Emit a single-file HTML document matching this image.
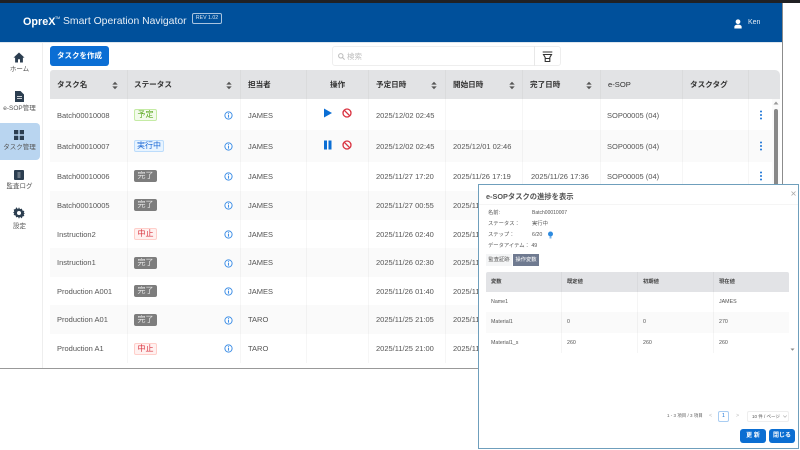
<!DOCTYPE html>
<html lang="ja"><head><meta charset="utf-8"><title>OpreX Smart Operation Navigator</title>
<style>
*{box-sizing:border-box}
html,body{margin:0;padding:0;width:800px;height:450px;overflow:hidden;background:#fff}
body{font-family:"Liberation Sans","Noto Sans CJK JP",sans-serif;font-size:7.5px;color:#555}
#all{position:absolute;left:0;top:0;width:800px;height:450px;overflow:hidden;filter:blur(.3px)}
.a{position:absolute;white-space:nowrap}
#win{position:absolute;left:0;top:0;width:783px;height:369px;background:#fff;border-right:1px solid #8c8c8c;border-bottom:1px solid #999;overflow:hidden}
.nav{position:absolute;left:0;width:39px;text-align:center;font-size:6.5px;color:#555;line-height:9px;white-space:nowrap}
.th{position:absolute;top:70px;height:29px;line-height:29px;font-weight:700;font-size:7.6px;color:#333;white-space:nowrap}
.r{position:absolute;left:50px;width:722px;background:#fff}
.r.z{background:#fafafa}
.r span{position:absolute;white-space:nowrap;top:0}
.c1{left:7px}.c3{left:198px}.c5{left:326px}.c6{left:403px}.c7{left:481px}.c8{left:557px}
.b{height:12px;line-height:10px;border:1px solid;border-radius:2px;text-align:center;font-size:8px;left:84px;width:23px}
.ok{background:#f3fbec;border-color:#c5eba5;color:#5aa81f}
.run{background:#e8f4ff;border-color:#bcdcfb;color:#1766d6;width:30px}
.done{background:#7d7d7d;border-color:#7d7d7d;color:#e4e4e4}
.stop{background:#fff1f0;border-color:#ffcfca;color:#d9333f}
.i{left:174px}
.k{left:709px}
.vl{position:absolute;top:70px;width:1px;height:293px;background:rgba(0,0,0,.035)}
.sort{position:absolute;top:81px}
#modal{position:absolute;left:478px;top:184px;width:321px;height:265px;background:#fff;border:1px solid #6f9fbc;overflow:hidden;font-size:5.3px;color:#555}
#modal .a{line-height:8px}
.mh{position:absolute;top:87px;height:20px;line-height:20px;font-weight:700;color:#444;font-size:5.3px}
.mr{position:absolute;left:7px;width:303px}
.mr span{position:absolute;top:0;white-space:nowrap}
.btn{position:absolute;top:244px;width:26px;height:14px;background:#0b6ed2;color:#fff;border-radius:3px;text-align:center;font-weight:700;font-size:6px;line-height:14px}
</style></head>
<body>
<svg width="0" height="0" style="position:absolute">
<defs>
<symbol id="info" viewBox="0 0 10 10"><circle cx="5" cy="5" r="4" fill="#fff" stroke="#3f8fe6" stroke-width="1.100"/><rect x="4.400" y="4.200" width="1.200" height="3.200" fill="#3f8fe6"/><rect x="4.400" y="2.400" width="1.200" height="1.100" fill="#3f8fe6"/></symbol>
<symbol id="sort" viewBox="0 0 8 10"><path d="M4 .8 7 4H1zM4 9.200 1 6h6z" fill="#555"/></symbol>
<symbol id="keb" viewBox="0 0 4 10"><circle cx="2" cy="1.500" r="1" fill="#1a73d6"/><circle cx="2" cy="5" r="1" fill="#1a73d6"/><circle cx="2" cy="8.500" r="1" fill="#1a73d6"/></symbol>
<symbol id="ban" viewBox="0 0 10 10"><circle cx="5" cy="5" r="4" fill="none" stroke="#d9303e" stroke-width="1.300"/><path d="M2.200 2.200 7.800 7.800" stroke="#d9303e" stroke-width="1.300"/></symbol>
</defs></svg>
<div id="all">
<div id="win">
<div style="position:absolute;left:0;top:0;width:783px;height:42px;background:#00509b"></div>
<div style="position:absolute;left:0;top:42px;width:783px;height:1px;background:#dde6ee"></div>
<div class="a" style="left:23px;top:15px;line-height:14px;font-size:10.8px;font-weight:700;color:#fff">OpreX</div>
<div class="a" style="left:55px;top:16px;font-size:3.500px;line-height:5px;color:#fff">TM</div>
<div class="a" style="left:63px;top:15px;line-height:14px;font-size:10.4px;color:#e6eef6">Smart Operation Navigator</div>
<div class="a" style="left:192px;top:13px;width:30px;height:11px;border:1px solid #a9c4df;border-radius:2px;color:#dbe7f2;font-size:5.200px;line-height:9px;text-align:center">REV 1.02</div>
<svg class="a" style="left:733px;top:19px" width="10" height="10" viewBox="0 0 10 11"><circle cx="5" cy="3" r="2.600" fill="#fff"/><path d="M1 10.500V8.600C1 7 3 6.200 5 6.200s4 .8 4 2.400v1.900z" fill="#fff"/></svg>
<div class="a" style="left:748px;top:18px;line-height:10px;font-size:7px;color:#e4edf5">Ken</div>

<div style="position:absolute;left:42px;top:43px;width:1px;height:325px;background:#eee"></div>
<div style="position:absolute;left:0;top:123px;width:40px;height:37px;background:#b9d5f0;border-radius:0 4px 4px 0"></div>

<div class="nav" style="top:65px">ホーム</div>
<svg class="a" style="left:13px;top:52px" width="12" height="11" viewBox="0 0 12 11"><path d="M6 .5.500 5.600h1.600V10.500h2.900V7.200h2V10.500h2.900V5.600h1.600z" fill="#2c3e50"/></svg>
<div class="nav" style="top:104px">e-SOP管理</div>
<svg class="a" style="left:15px;top:91px" width="9" height="11" viewBox="0 0 9 11"><path d="M0 0h5.500L9 3.500V11H0z" fill="#2c3e50"/><path d="M2 5.500h5M2 7.500h5" stroke="#fff" stroke-width=".7"/></svg>
<div class="nav" style="top:143px">タスク管理</div>
<svg class="a" style="left:14px;top:130px" width="10" height="10" viewBox="0 0 10 10"><path d="M0 0h4.300v4.300H0zM5.700 0H10v4.300H5.700zM0 5.700h4.300V10H0zM5.700 5.700H10V10H5.700z" fill="#2c3e50"/></svg>
<div class="nav" style="top:182px">監査ログ</div>
<svg class="a" style="left:14px;top:170px" width="10" height="10" viewBox="0 0 10 10"><rect width="10" height="10" rx="1" fill="#2c3e50"/><path d="M3.500 3h3M3.500 5h3M3.500 7h3" stroke="#cfd6dc" stroke-width=".8"/></svg>
<div class="nav" style="top:222px">設定</div>
<svg class="a" style="left:13px;top:207px" width="12" height="12" viewBox="0 0 12 12"><path d="M6 .3 7 2.100l1.900-.5.500 1.900 1.900.5-.5 1.900L12 6l-1.200 1.100.5 1.900-1.900.5-.5 1.900L7 9.900 6 11.700 5 9.900l-1.900.5-.5-1.900L.7 8l.5-1.900L0 6l1.200-1.600-.5-1.900 1.900-.5.500-1.900L5 2.100z" fill="#2c3e50"/><circle cx="6" cy="6" r="2" fill="#fff"/></svg>

<div class="a" style="left:50px;top:46px;width:59px;height:20px;background:#0b6ed4;border-radius:3px;color:#fff;font-weight:700;font-size:7.500px;line-height:20px;text-align:center">タスクを作成</div>
<div class="a" style="left:332px;top:46px;width:229px;height:20px;border:1px solid #eee;border-radius:3px"></div>
<div style="position:absolute;left:534px;top:46px;width:1px;height:20px;background:#e8e8e8"></div>
<svg class="a" style="left:338px;top:53px" width="7" height="7" viewBox="0 0 7 7"><circle cx="2.800" cy="2.800" r="2.200" fill="none" stroke="#bbb"/><path d="M4.500 4.500 6.600 6.600" stroke="#bbb"/></svg>
<div class="a" style="left:347px;top:51px;line-height:11px;font-size:7.500px;color:#bdbdbd">検索</div>
<svg class="a" style="left:542px;top:51px" width="11" height="12" viewBox="0 0 11 12"><path d="M.7 1h9.600M1.500 3.500h8L7.800 6.500v4H3.200v-4zM3.200 7.500h4.600" fill="none" stroke="#333" stroke-width="1.100"/></svg>

<div style="position:absolute;left:50px;top:70px;width:730px;height:29px;background:#e2e3e5;border-radius:3px 5px 0 0"></div>
<div class="th" style="left:57px">タスク名</div>
<div class="th" style="left:134px">ステータス</div>
<div class="th" style="left:248px">担当者</div>
<div class="th" style="left:330px">操作</div>
<div class="th" style="left:376px">予定日時</div>
<div class="th" style="left:453px">開始日時</div>
<div class="th" style="left:530px">完了日時</div>
<div class="th" style="left:608px;font-weight:400">e-SOP</div>
<div class="th" style="left:690px">タスクタグ</div>
<svg class="sort" style="left:111px" width="8" height="9"><use href="#sort"/></svg>
<svg class="sort" style="left:225px" width="8" height="9"><use href="#sort"/></svg>
<svg class="sort" style="left:430px" width="8" height="9"><use href="#sort"/></svg>
<svg class="sort" style="left:508px" width="8" height="9"><use href="#sort"/></svg>
<svg class="sort" style="left:585px" width="8" height="9"><use href="#sort"/></svg>

<div class="r" style="top:99px;height:31px;line-height:33px"><span class="c1">Batch00010008</span><span class="b ok" style="margin-top:10px">予定</span><span class="i"><svg width="9" height="9" style="margin-top:12px;display:block"><use href="#info"/></svg></span><span class="c3">JAMES</span><span class="c5">2025/12/02 02:45</span><span class="c8">SOP00005 (04)</span><span class="k"><svg width="4" height="10" style="margin-top:11px;display:block"><use href="#keb"/></svg></span></div>
<div class="r z" style="top:130px;height:32px;line-height:34px"><span class="c1">Batch00010007</span><span class="b run" style="margin-top:10px">実行中</span><span class="i"><svg width="9" height="9" style="margin-top:12px;display:block"><use href="#info"/></svg></span><span class="c3">JAMES</span><span class="c5">2025/12/02 02:45</span><span class="c6">2025/12/01 02:46</span><span class="c8">SOP00005 (04)</span><span class="k"><svg width="4" height="10" style="margin-top:11px;display:block"><use href="#keb"/></svg></span></div>
<div class="r" style="top:162px;height:29px;line-height:29px"><span class="c1">Batch00010006</span><span class="b done" style="margin-top:8px">完了</span><span class="i"><svg width="9" height="9" style="margin-top:10px;display:block"><use href="#info"/></svg></span><span class="c3">JAMES</span><span class="c5">2025/11/27 17:20</span><span class="c6">2025/11/26 17:19</span><span class="c7">2025/11/26 17:36</span><span class="c8">SOP00005 (04)</span><span class="k"><svg width="4" height="10" style="margin-top:9px;display:block"><use href="#keb"/></svg></span></div>
<div class="r z" style="top:191px;height:29px;line-height:29px"><span class="c1">Batch00010005</span><span class="b done" style="margin-top:8px">完了</span><span class="i"><svg width="9" height="9" style="margin-top:10px;display:block"><use href="#info"/></svg></span><span class="c3">JAMES</span><span class="c5">2025/11/27 00:55</span><span class="c6">2025/11/26 17:19</span></div>
<div class="r" style="top:220px;height:28px;line-height:29px"><span class="c1">Instruction2</span><span class="b stop" style="margin-top:8px">中止</span><span class="i"><svg width="9" height="9" style="margin-top:10px;display:block"><use href="#info"/></svg></span><span class="c3">JAMES</span><span class="c5">2025/11/26 02:40</span><span class="c6">2025/11/26 02:40</span></div>
<div class="r z" style="top:248px;height:29px;line-height:30px"><span class="c1">Instruction1</span><span class="b done" style="margin-top:9px">完了</span><span class="i"><svg width="9" height="9" style="margin-top:11px;display:block"><use href="#info"/></svg></span><span class="c3">JAMES</span><span class="c5">2025/11/26 02:30</span><span class="c6">2025/11/26 02:30</span></div>
<div class="r" style="top:277px;height:28px;line-height:29px"><span class="c1">Production A001</span><span class="b done" style="margin-top:8px">完了</span><span class="i"><svg width="9" height="9" style="margin-top:10px;display:block"><use href="#info"/></svg></span><span class="c3">JAMES</span><span class="c5">2025/11/26 01:40</span><span class="c6">2025/11/26 01:40</span></div>
<div class="r z" style="top:305px;height:29px;line-height:30px"><span class="c1">Production A01</span><span class="b done" style="margin-top:9px">完了</span><span class="i"><svg width="9" height="9" style="margin-top:11px;display:block"><use href="#info"/></svg></span><span class="c3">TARO</span><span class="c5">2025/11/25 21:05</span><span class="c6">2025/11/25 21:05</span></div>
<div class="r" style="top:334px;height:29px;line-height:30px"><span class="c1">Production A1</span><span class="b stop" style="margin-top:9px">中止</span><span class="i"><svg width="9" height="9" style="margin-top:10px;display:block"><use href="#info"/></svg></span><span class="c3">TARO</span><span class="c5">2025/11/25 21:00</span><span class="c6">2025/11/25 21:00</span></div>

<div class="vl" style="left:127px"></div><div class="vl" style="left:240px"></div><div class="vl" style="left:306px"></div><div class="vl" style="left:368px"></div><div class="vl" style="left:445px"></div><div class="vl" style="left:522px"></div><div class="vl" style="left:600px"></div><div class="vl" style="left:682px"></div><div class="vl" style="left:748px"></div>

<svg class="a" style="left:323px;top:108px" width="10" height="10" viewBox="0 0 10 10"><path d="M1 .5 9 5 1 9.500z" fill="#0b6ed4"/></svg>
<svg class="a" style="left:342px;top:108px" width="10" height="10"><use href="#ban"/></svg>
<svg class="a" style="left:323px;top:140px" width="10" height="10" viewBox="0 0 10 10"><path d="M1 .5h3v9H1zM5.500 .5h3v9h-3z" fill="#0b6ed4"/></svg>
<svg class="a" style="left:342px;top:140px" width="10" height="10"><use href="#ban"/></svg>

<div style="position:absolute;left:772px;top:99px;width:8px;height:264px;background:#fafafa"></div>
<svg class="a" style="left:773px;top:101px" width="6" height="4"><path d="M3 .5 5.500 3.500H.5z" fill="#999"/></svg>
<div style="position:absolute;left:774px;top:109px;width:4px;height:80px;background:#888;border-radius:2px"></div>
</div>

<div style="position:absolute;left:0;top:0;width:800px;height:3px;background:#202124"></div>

<div id="modal">
<div class="a" style="left:7px;top:7px;font-size:7.300px;font-weight:700;color:#555;line-height:9px">e-SOPタスクの進捗を表示</div>
<svg class="a" style="left:312px;top:6px" width="5" height="5"><path d="M.5.5 4.500 4.500M4.500.5.500 4.500" stroke="#aaa" stroke-width=".8"/></svg>
<div style="position:absolute;left:0;top:19px;width:319px;height:1px;background:#f5f5f5"></div>
<div class="a" style="left:9px;top:24px">名前:</div><div class="a" style="left:53px;top:24px;font-size:5px">Batch00010007</div>
<div class="a" style="left:9px;top:35px">ステータス：</div><div class="a" style="left:53px;top:35px">実行中</div>
<div class="a" style="left:9px;top:46px">ステップ：</div><div class="a" style="left:53px;top:46px">6/20</div>
<svg class="a" style="left:68px;top:46px" width="7" height="8" viewBox="0 0 7 8"><circle cx="3.500" cy="3" r="2.500" fill="#2e8be0"/><rect x="2.500" y="5.500" width="2" height="2" fill="#7ab5ea"/></svg>
<div class="a" style="left:9px;top:57px">データアイテム： 49</div>
<div class="a" style="left:7px;top:69px;width:26px;height:12px;background:#f4f5f6;line-height:12px !important;text-align:center;color:#555">監査証跡</div>
<div class="a" style="left:34px;top:69px;width:26px;height:12px;background:#6f7a90;line-height:12px !important;text-align:center;color:#fff">操作変数</div>

<div style="position:absolute;left:7px;top:87px;width:303px;height:20px;background:#e2e3e6;border-radius:2px 2px 0 0"></div>
<div class="mh" style="left:12px">変数</div><div class="mh" style="left:88px">既定値</div><div class="mh" style="left:164px">初期値</div><div class="mh" style="left:240px">現在値</div>
<div class="mr" style="top:107px;height:20px;line-height:20px"><span style="left:5px">Name1</span><span style="left:233px">JAMES</span></div>
<div class="mr" style="top:127px;height:21px;line-height:21px;background:#fafafa"><span style="left:5px">Material1</span><span style="left:81px">0</span><span style="left:157px">0</span><span style="left:233px">270</span></div>
<div class="mr" style="top:148px;height:20px;line-height:20px"><span style="left:5px">Material1_s</span><span style="left:81px">260</span><span style="left:157px">260</span><span style="left:233px">260</span></div>
<div style="position:absolute;left:82px;top:87px;width:1px;height:81px;background:rgba(0,0,0,.04)"></div>
<div style="position:absolute;left:158px;top:87px;width:1px;height:81px;background:rgba(0,0,0,.04)"></div>
<div style="position:absolute;left:234px;top:87px;width:1px;height:81px;background:rgba(0,0,0,.04)"></div>
<svg class="a" style="left:311px;top:163px" width="5" height="3"><path d="M.5.5h4L2.500 2.800z" fill="#888"/></svg>

<div class="a" style="left:188px;top:227px;font-size:4.500px;color:#666">1 - 3 項目 / 3 項目</div>
<div class="a" style="left:230px;top:227px;color:#bbb">&lt;</div>
<div class="a" style="left:239px;top:226px;width:11px;height:11px;border:1px solid #a9cdf2;border-radius:2px;text-align:center;color:#1a73d6;line-height:9px !important">1</div>
<div class="a" style="left:257px;top:227px;color:#bbb">&gt;</div>
<div class="a" style="left:268px;top:226px;width:42px;height:11px;border:1px solid #eee;border-radius:2px;padding-left:4px;font-size:4.500px;line-height:9px !important">10 件 / ページ</div>
<svg class="a" style="left:304px;top:230px" width="4" height="3"><path d="M.3.5 2 2.300 3.700.5" fill="none" stroke="#aaa" stroke-width=".6"/></svg>
<div class="btn" style="left:261px">更 新</div>
<div class="btn" style="left:290px">閉じる</div>
</div>
</div>
</body></html>
